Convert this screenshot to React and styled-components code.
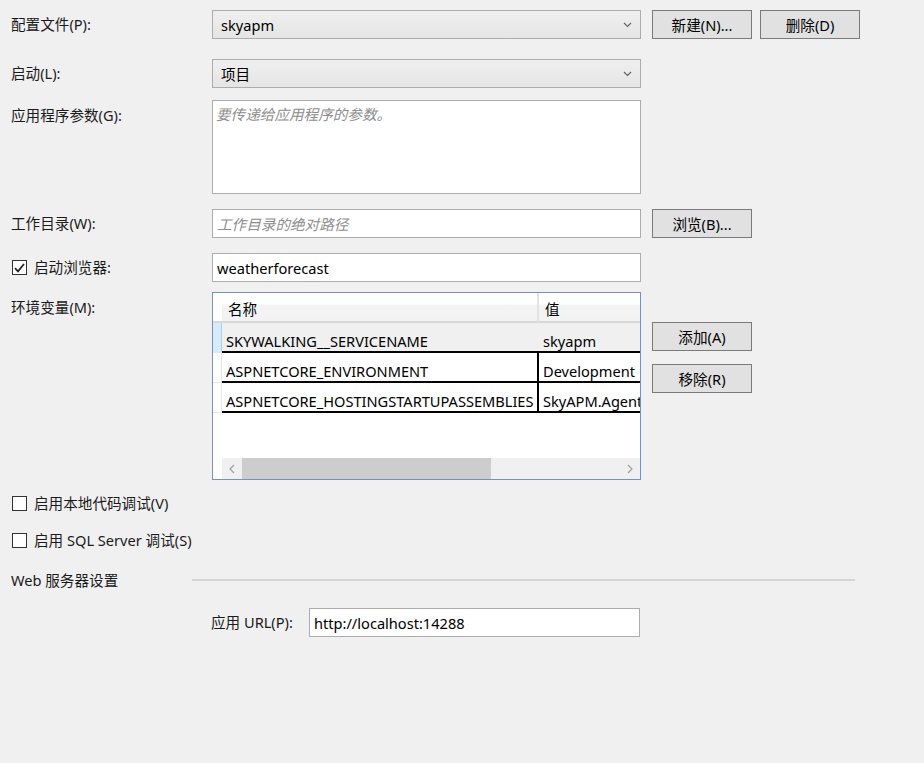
import React from "react";
import styled, { createGlobalStyle } from "styled-components";

const GlobalStyle = createGlobalStyle`
  html, body {
    margin: 0;
    padding: 0;
    background: #f0f0f0;
  }
  body {
    font-family: "Noto Sans", "Noto Sans CJK SC", sans-serif;
    font-size: 14.6px;
    color: #1a1a1a;
  }
`;

const envVars = [
  { name: "SKYWALKING__SERVICENAME", value: "skyapm" },
  { name: "ASPNETCORE_ENVIRONMENT", value: "Development" },
  { name: "ASPNETCORE_HOSTINGSTARTUPASSEMBLIES", value: "SkyAPM.Agent.AspNetCore" },
];

const Page = styled.div`
  width: 924px;
  height: 763px;
  padding: 10px 0 0 11px;
  box-sizing: border-box;
  display: flex;
  flex-direction: column;
`;

const Row = styled.div`
  display: flex;
  align-items: ${(p) => (p.$center ? "center" : "flex-start")};
  margin-top: ${(p) => p.$mt || 0}px;
  padding-left: ${(p) => p.$indent || 0}px;
`;

const Label = styled.div`
  width: ${(p) => p.$w || 201}px;
  flex-shrink: 0;
  line-height: 29px;
  white-space: nowrap;
  padding-top: ${(p) => p.$pt || 0}px;
`;

const Combo = styled.div`
  width: 429px;
  height: 29px;
  box-sizing: border-box;
  border: 1px solid #acacac;
  background: linear-gradient(#efefef, #e5e5e5);
  display: flex;
  align-items: center;
  justify-content: space-between;
  padding: 0 8px 0 8px;
  color: #000;
`;

const Chevron = () => (
  <svg width="9" height="6" viewBox="0 0 9 6">
    <path d="M1 1 L4.5 4.5 L8 1" fill="none" stroke="#606060" strokeWidth="1.1" />
  </svg>
);

const Button = styled.div`
  width: 100px;
  height: 29px;
  box-sizing: border-box;
  border: 1px solid #7a7a7a;
  background: #e1e1e1;
  display: flex;
  align-items: center;
  justify-content: center;
  color: #000;
`;

const Buttons = styled.div`
  display: flex;
  flex-direction: ${(p) => (p.$column ? "column" : "row")};
  gap: ${(p) => (p.$column ? 13 : 8)}px;
  margin-left: 11px;
  margin-top: ${(p) => p.$mt || 0}px;
`;

const TextBox = styled.div`
  width: ${(p) => p.$w || 429}px;
  height: ${(p) => p.$h || 29}px;
  box-sizing: border-box;
  border: 1px solid #acacac;
  background: #fff;
  padding: ${(p) => (p.$multi ? "2px 3px" : "0 4px")};
  display: flex;
  align-items: ${(p) => (p.$multi ? "flex-start" : "center")};
  color: #000;
  line-height: 22px;
`;

const Placeholder = styled.span`
  font-style: italic;
  color: #8d8d8d;
`;

const CheckBox = styled.div`
  width: 15px;
  height: 15px;
  box-sizing: border-box;
  border: 1px solid #333;
  background: #fff;
  margin: 0 7px 0 1px;
  display: flex;
  align-items: center;
  justify-content: center;
  flex-shrink: 0;
`;

const CheckLabel = styled.div`
  display: flex;
  align-items: center;
  width: 201px;
  line-height: 29px;
  white-space: nowrap;
`;

const Tick = () => (
  <svg width="11" height="10" viewBox="0 0 11 10">
    <path d="M1 5.2 L4 8.3 L10 1" fill="none" stroke="#222" strokeWidth="1.8" />
  </svg>
);

const GridBox = styled.div`
  width: 429px;
  height: 188px;
  box-sizing: border-box;
  border: 1px solid #6f92c8;
  background: #fff;
  display: flex;
  flex-direction: column;
  overflow: hidden;
`;

const Table = styled.div`
  display: grid;
  grid-template-columns: 9px 317px 140px;
  grid-auto-rows: 30px;
`;

const HeadCell = styled.div`
  box-sizing: border-box;
  background: ${(p) => (p.$gutter ? "#fff" : "linear-gradient(#ffffff 0, #ffffff 11px, #f4f4f4 12px, #f2f2f2 100%)")};
  border-bottom: 2px solid #d8d8d8;
  border-right: ${(p) => (p.$divider ? "2px solid #e3e3e3" : "none")};
  padding: 7px 0 0 ${(p) => (p.$gutter ? 0 : 6)}px;
  line-height: 18px;
  color: #000;
`;

const Gutter = styled.div`
  box-sizing: border-box;
  background: ${(p) => (p.$active ? "#d9ebf9" : "#fff")};
  border-right: 1px solid ${(p) => (p.$active ? "#a9d2f2" : "#e6e6e6")};
  border-bottom: 1px solid #e6e6e6;
`;

const Cell = styled.div`
  box-sizing: border-box;
  background: ${(p) => (p.$shaded ? "#f0f0f0" : "#fff")};
  border-bottom: 2px solid #000;
  border-right: ${(p) => (p.$divider ? "2px solid #000" : "none")};
  padding: 8px 0 0 4px;
  line-height: 20px;
  white-space: nowrap;
  overflow: hidden;
  color: #000;
`;

const Spacer = styled.div`
  flex: 1;
`;

const ScrollBar = styled.div`
  height: 21px;
  margin-left: 9px;
  background: #f0f0f0;
  display: flex;
  align-items: center;
`;

const ScrollArrow = styled.div`
  width: 20px;
  height: 21px;
  display: flex;
  align-items: center;
  justify-content: center;
`;

const ScrollTrack = styled.div`
  flex: 1;
  height: 21px;
`;

const ScrollThumb = styled.div`
  width: 249px;
  height: 21px;
  background: #cdcdcd;
`;

const Arrow = ({ dir }) => (
  <svg width="6" height="10" viewBox="0 0 6 10">
    <path
      d={dir === "left" ? "M5 1 L1 5 L5 9" : "M1 1 L5 5 L1 9"}
      fill="none"
      stroke="#a0a0a0"
      strokeWidth="1.2"
    />
  </svg>
);

const Section = styled.div`
  display: flex;
  align-items: center;
  margin-top: ${(p) => p.$mt || 0}px;
  line-height: 22px;
`;

const SectionTitle = styled.div`
  width: 181px;
  white-space: nowrap;
`;

const Rule = styled.div`
  width: 663px;
  height: 2px;
  background: #d5d5d5;
`;

const App = () => {
  return (
    <>
      <GlobalStyle />
      <Page>
        <Row>
          <Label>配置文件(P):</Label>
          <Combo>
            <span>skyapm</span>
            <Chevron />
          </Combo>
          <Buttons>
            <Button>新建(N)...</Button>
            <Button>删除(D)</Button>
          </Buttons>
        </Row>

        <Row $mt={20}>
          <Label>启动(L):</Label>
          <Combo>
            <span>项目</span>
            <Chevron />
          </Combo>
        </Row>

        <Row $mt={12}>
          <Label $pt={1}>应用程序参数(G):</Label>
          <TextBox $h={94} $multi>
            <Placeholder>要传递给应用程序的参数。</Placeholder>
          </TextBox>
        </Row>

        <Row $mt={15}>
          <Label>工作目录(W):</Label>
          <TextBox>
            <Placeholder>工作目录的绝对路径</Placeholder>
          </TextBox>
          <Buttons>
            <Button>浏览(B)...</Button>
          </Buttons>
        </Row>

        <Row $mt={15}>
          <CheckLabel>
            <CheckBox>
              <Tick />
            </CheckBox>
            启动浏览器:
          </CheckLabel>
          <TextBox>weatherforecast</TextBox>
        </Row>

        <Row $mt={10}>
          <Label $pt={1}>环境变量(M):</Label>
          <GridBox>
            <Table>
              <HeadCell $gutter />
              <HeadCell $divider>名称</HeadCell>
              <HeadCell>值</HeadCell>
              {envVars.map((v, i) => (
                <React.Fragment key={v.name}>
                  <Gutter $active={i === 0} />
                  <Cell $shaded={i === 0} $divider={i !== 0}>
                    {v.name}
                  </Cell>
                  <Cell $shaded={i === 0}>{v.value}</Cell>
                </React.Fragment>
              ))}
            </Table>
            <Spacer />
            <ScrollBar>
              <ScrollArrow>
                <Arrow dir="left" />
              </ScrollArrow>
              <ScrollTrack>
                <ScrollThumb />
              </ScrollTrack>
              <ScrollArrow>
                <Arrow dir="right" />
              </ScrollArrow>
            </ScrollBar>
          </GridBox>
          <Buttons $column $mt={30}>
            <Button>添加(A)</Button>
            <Button>移除(R)</Button>
          </Buttons>
        </Row>

        <Row $mt={9} $center>
          <CheckLabel>
            <CheckBox />
            启用本地代码调试(V)
          </CheckLabel>
        </Row>

        <Row $mt={8} $center>
          <CheckLabel>
            <CheckBox />
            启用 SQL Server 调试(S)
          </CheckLabel>
        </Row>

        <Section $mt={14}>
          <SectionTitle>Web 服务器设置</SectionTitle>
          <Rule />
        </Section>

        <Row $mt={17} $indent={200}>
          <Label $w={98}>应用 URL(P):</Label>
          <TextBox $w={331}>http://localhost:14288</TextBox>
        </Row>
      </Page>
    </>
  );
};

export default App;
